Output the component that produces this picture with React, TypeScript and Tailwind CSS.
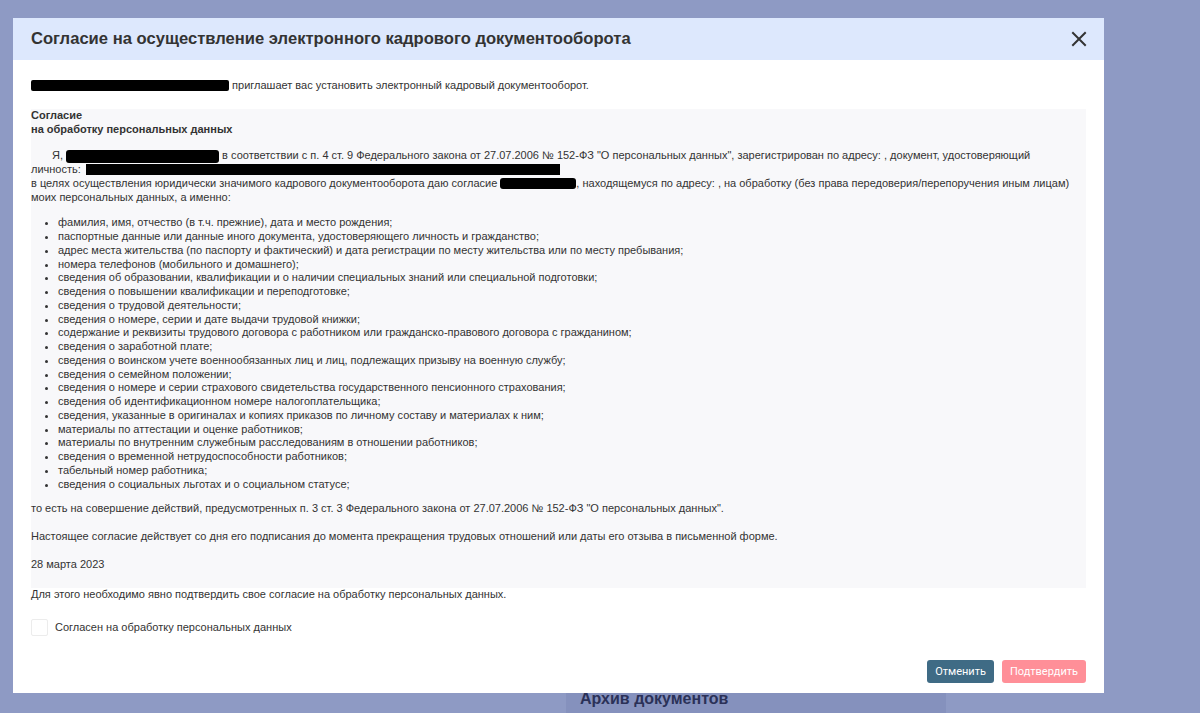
import React from "react";

const items = [
  "фамилия, имя, отчество (в т.ч. прежние), дата и место рождения;",
  "паспортные данные или данные иного документа, удостоверяющего личность и гражданство;",
  "адрес места жительства (по паспорту и фактический) и дата регистрации по месту жительства или по месту пребывания;",
  "номера телефонов (мобильного и домашнего);",
  "сведения об образовании, квалификации и о наличии специальных знаний или специальной подготовки;",
  "сведения о повышении квалификации и переподготовке;",
  "сведения о трудовой деятельности;",
  "сведения о номере, серии и дате выдачи трудовой книжки;",
  "содержание и реквизиты трудового договора с работником или гражданско-правового договора с гражданином;",
  "сведения о заработной плате;",
  "сведения о воинском учете военнообязанных лиц и лиц, подлежащих призыву на военную службу;",
  "сведения о семейном положении;",
  "сведения о номере и серии страхового свидетельства государственного пенсионного страхования;",
  "сведения об идентификационном номере налогоплательщика;",
  "сведения, указанные в оригиналах и копиях приказов по личному составу и материалах к ним;",
  "материалы по аттестации и оценке работников;",
  "материалы по внутренним служебным расследованиям в отношении работников;",
  "сведения о временной нетрудоспособности работников;",
  "табельный номер работника;",
  "сведения о социальных льготах и о социальном статусе;",
];

export default function App() {
  return (
    <div className="relative w-[1200px] h-[713px] overflow-hidden bg-[#8e9ac4] font-['Liberation_Sans',Arial,sans-serif]">
      {/* background page */}
      <div className="flex flex-col h-full">
        <div className="pl-[170px] pt-[11px] text-[34px] leading-[42px] font-bold text-[#283c96] whitespace-nowrap">
          Электронный кадровый документооборот
        </div>
        <div className="flex-1" />
        <div className="flex">
          <div className="w-[566px]" />
          <div className="w-[380px] h-[30px] bg-[#8591bd] pl-[14px] pt-[4px] text-[16px] font-bold text-[#2b3158]">
            Архив документов
          </div>
        </div>
      </div>

      {/* modal */}
      <div className="absolute left-[13px] top-[18px] w-[1091px] h-[675px] bg-white flex flex-col">
        <div className="h-[42px] bg-[#dde8fd] pl-[18px] pr-[16px] flex items-center justify-between">
          <div className="text-[16.6px] font-bold text-[#333]">
            Согласие на осуществление электронного кадрового документооборота
          </div>
          <svg width="16" height="16" viewBox="0 0 16 16" className="mr-[1px]">
            <path d="M2 2 L14 14 M14 2 L2 14" stroke="#333" strokeWidth="2" strokeLinecap="square" />
          </svg>
        </div>

        <div className="flex-1 flex flex-col px-[18px] pt-[19px] pb-[10px] text-[11px] leading-[13.75px] text-[#333]">
          <div className="flex items-center whitespace-nowrap">
            <span className="inline-block shrink-0 w-[198px] h-[11px] bg-black rounded-[2px]" />
            <span>&nbsp;приглашает вас установить электронный кадровый документооборот.</span>
          </div>

          <div className="mt-[16px] bg-[#f8f8fa] pb-[16px]">
            <div className="font-bold">Согласие</div>
            <div className="font-bold">на обработку персональных данных</div>

            <div className="mt-[13px]">
              <div className="flex items-center whitespace-nowrap pl-[21px]">
                <span>Я,&nbsp;</span>
                <span className="inline-block shrink-0 w-[153px] h-[13px] bg-black rounded-[3px]" />
                <span>&nbsp;в соответствии с п. 4 ст. 9 Федерального закона от 27.07.2006 № 152-ФЗ "О персональных данных", зарегистрирован по адресу: , документ, удостоверяющий</span>
              </div>
              <div className="flex items-center whitespace-nowrap">
                <span>личность:&nbsp;</span>
                <span className="inline-block shrink-0 w-[474px] h-[11px] bg-black ml-[2px]" />
              </div>
              <div className="flex items-center whitespace-nowrap">
                <span>в целях осуществления юридически значимого кадрового документооборота даю согласие&nbsp;</span>
                <span className="inline-block shrink-0 w-[76px] h-[11px] bg-black rounded-[3px]" />
                <span>, находящемуся по адресу: , на обработку (без права передоверия/перепоручения иным лицам)</span>
              </div>
              <div className="whitespace-nowrap">моих персональных данных, а именно:</div>
            </div>

            <ul className="mt-[12px] pl-[27px] list-disc">
              {items.map((t) => (
                <li key={t} className="whitespace-nowrap">{t}</li>
              ))}
            </ul>

            <div className="mt-[11px]">
              то есть на совершение действий, предусмотренных п. 3 ст. 3 Федерального закона от 27.07.2006 № 152-ФЗ "О персональных данных".
            </div>
            <div className="mt-[14px]">
              Настоящее согласие действует со дня его подписания до момента прекращения трудовых отношений или даты его отзыва в письменной форме.
            </div>
            <div className="mt-[14px]">28 марта 2023</div>
          </div>

          <div>Для этого необходимо явно подтвердить свое согласие на обработку персональных данных.</div>

          <div className="mt-[18px] flex items-center gap-[7px]">
            <span className="inline-block w-[17px] h-[17px] border border-[#ececec] rounded-[2px] bg-white" />
            <span>Согласен на обработку персональных данных</span>
          </div>

          <div className="mt-auto flex justify-end gap-[8px] font-['Roboto',sans-serif]">
            <button className="h-[23px] px-[8px] rounded-[3px] bg-[#3f6b85] text-white text-[11px] leading-[23px]">
              Отменить
            </button>
            <button className="h-[23px] px-[8px] rounded-[3px] bg-[#ff8f98] text-white text-[11px] leading-[23px]">
              Подтвердить
            </button>
          </div>
        </div>
      </div>
    </div>
  );
}
